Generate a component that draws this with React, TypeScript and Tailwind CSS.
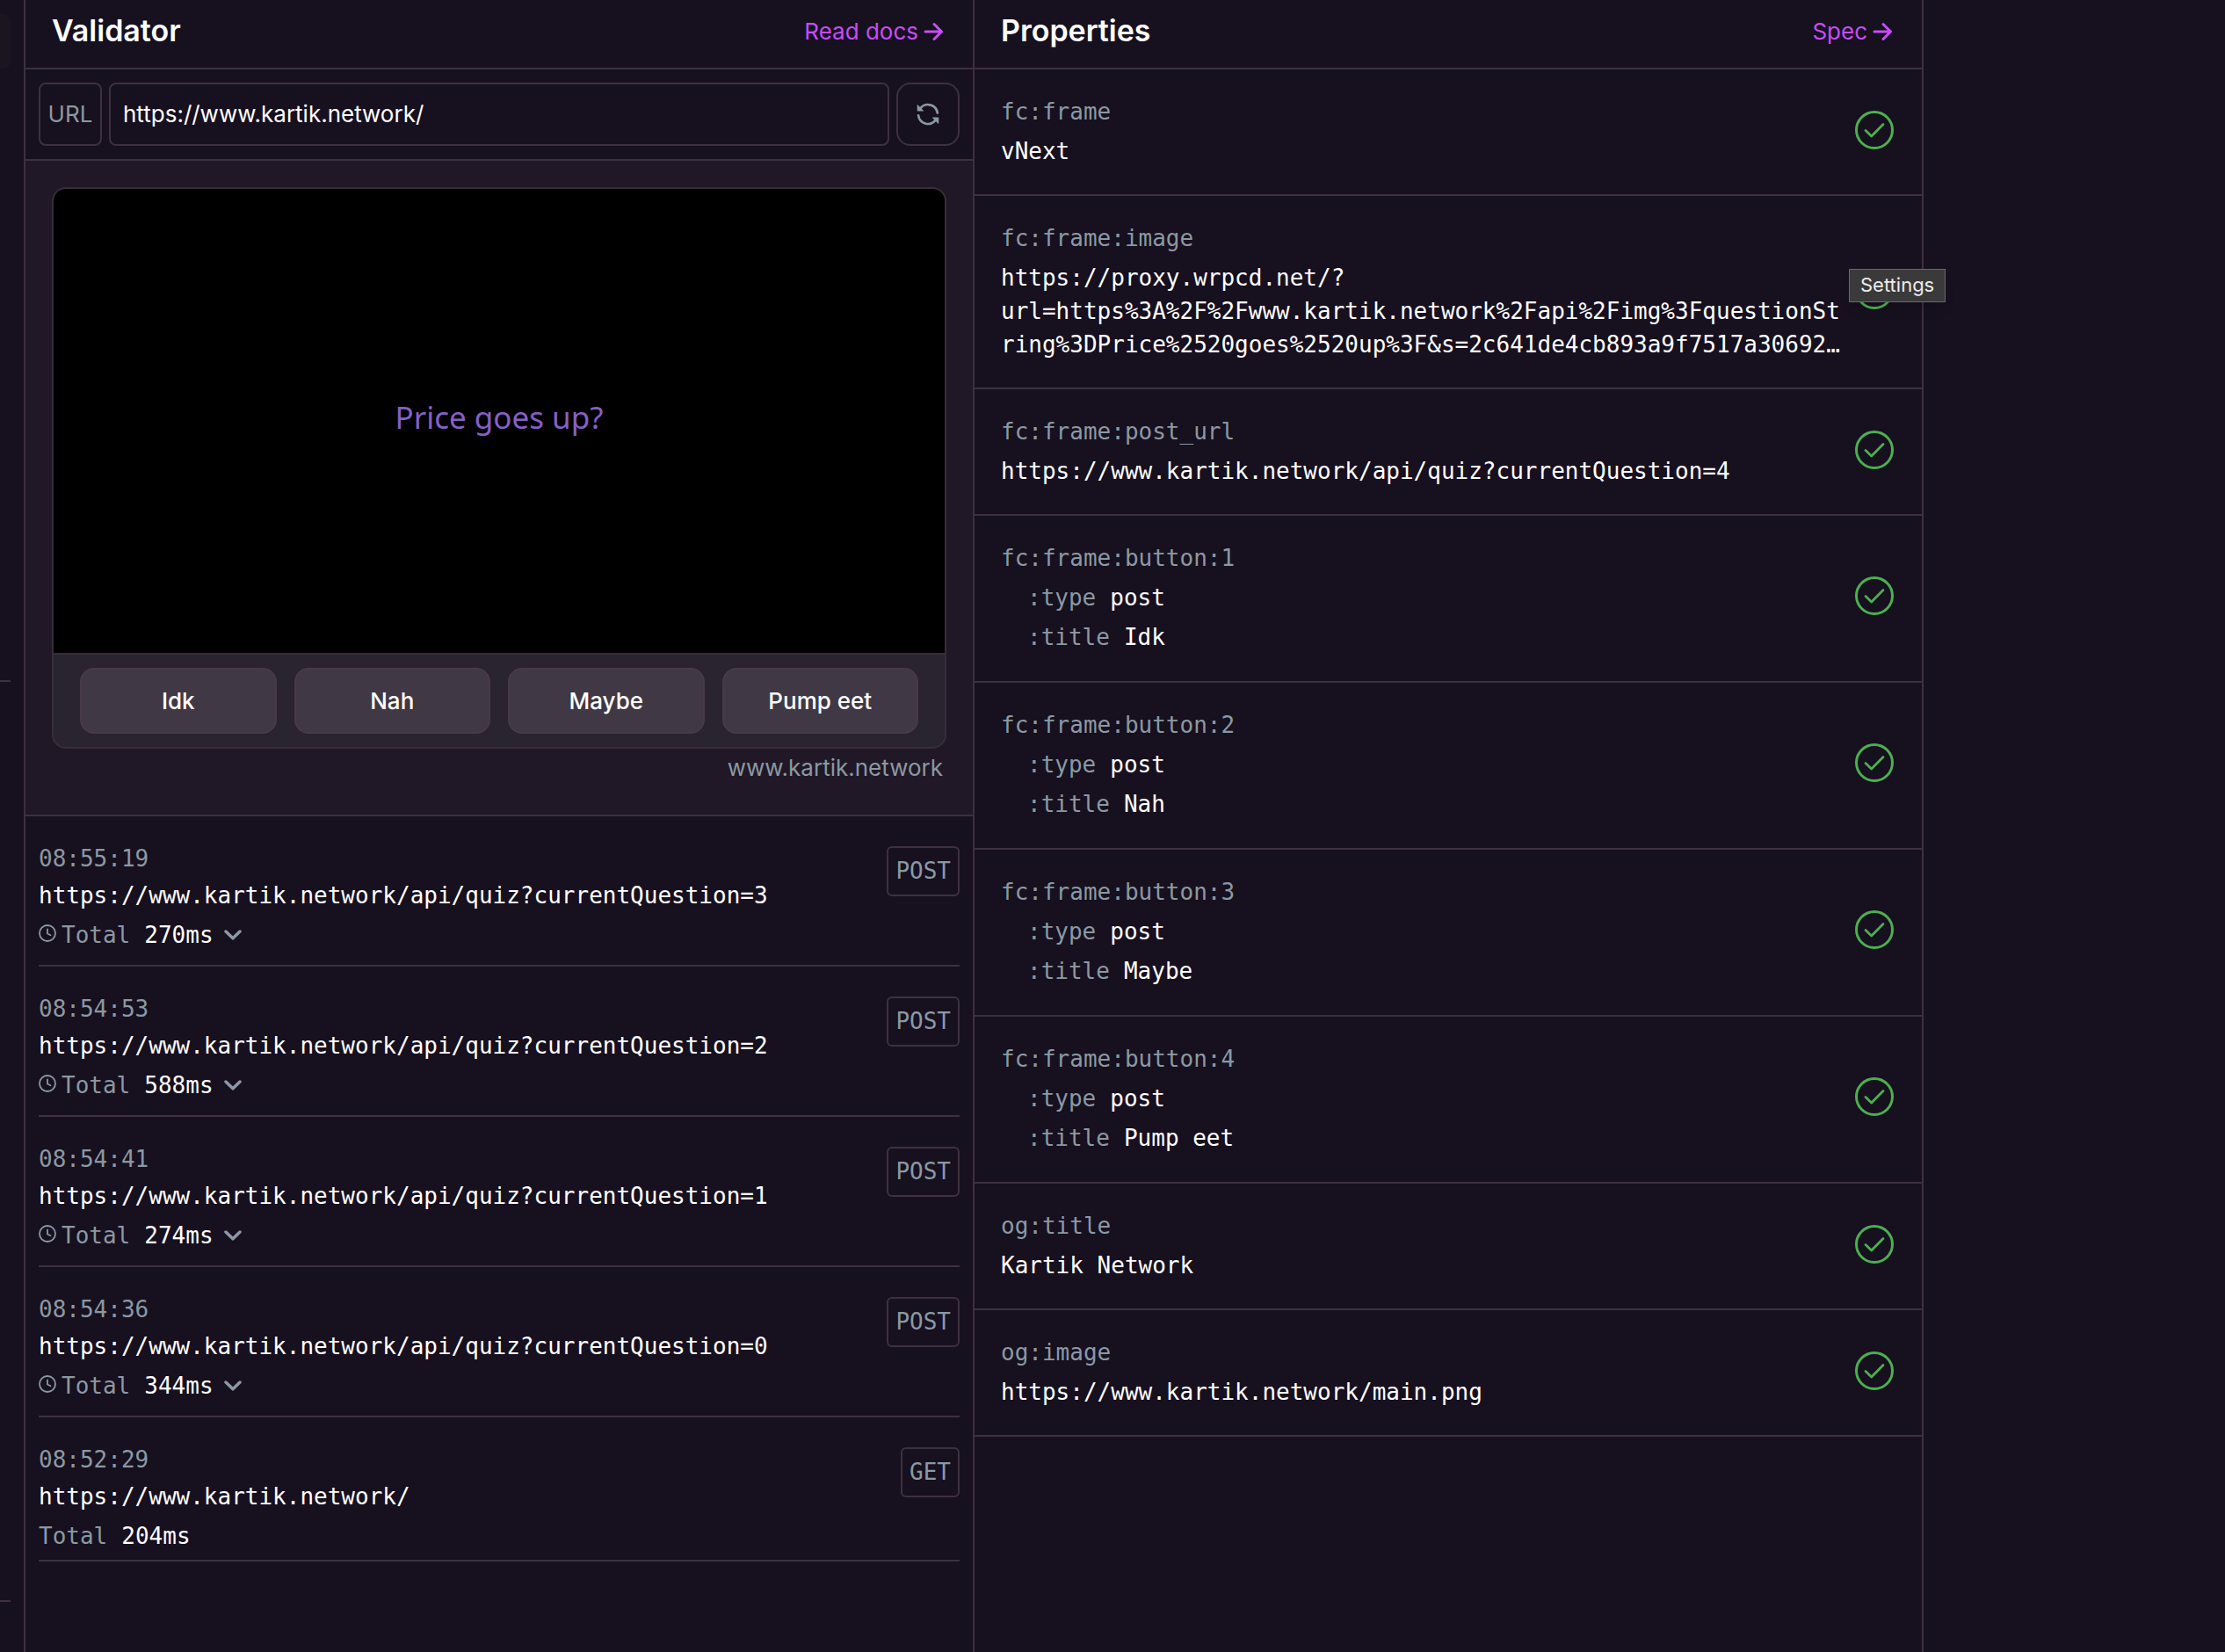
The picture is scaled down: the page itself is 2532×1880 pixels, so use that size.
import { useState } from 'react';

interface LogEntry {
  time: string;
  url: string;
  total: string;
  method: string;
  expandable: boolean;
}

interface Property {
  name: string;
  value?: string;
  fields?: { key: string; value: string }[];
}

const frameButtons = ['Idk', 'Nah', 'Maybe', 'Pump eet'];

const logs: LogEntry[] = [
  { time: '08:55:19', url: 'https://www.kartik.network/api/quiz?currentQuestion=3', total: '270ms', method: 'POST', expandable: true },
  { time: '08:54:53', url: 'https://www.kartik.network/api/quiz?currentQuestion=2', total: '588ms', method: 'POST', expandable: true },
  { time: '08:54:41', url: 'https://www.kartik.network/api/quiz?currentQuestion=1', total: '274ms', method: 'POST', expandable: true },
  { time: '08:54:36', url: 'https://www.kartik.network/api/quiz?currentQuestion=0', total: '344ms', method: 'POST', expandable: true },
  { time: '08:52:29', url: 'https://www.kartik.network/', total: '204ms', method: 'GET', expandable: false },
];

const properties: Property[] = [
  { name: 'fc:frame', value: 'vNext' },
  {
    name: 'fc:frame:image',
    value:
      'https://proxy.wrpcd.net/?url=https%3A%2F%2Fwww.kartik.network%2Fapi%2Fimg%3FquestionString%3DPrice%2520goes%2520up%3F&s=2c641de4cb893a9f7517a30692…',
  },
  { name: 'fc:frame:post_url', value: 'https://www.kartik.network/api/quiz?currentQuestion=4' },
  ...frameButtons.map((title, i) => ({
    name: `fc:frame:button:${i + 1}`,
    fields: [
      { key: ':type', value: 'post' },
      { key: ':title', value: title },
    ],
  })),
  { name: 'og:title', value: 'Kartik Network' },
  { name: 'og:image', value: 'https://www.kartik.network/main.png' },
];

const ArrowIcon = () => (
  <svg viewBox="0 0 22 22" className="h-[22px] w-[22px]" fill="none" stroke="currentColor" strokeWidth="3" strokeLinecap="round" strokeLinejoin="round">
    <path d="M2 11H20M12 2.5L20.5 11L12 19.5" />
  </svg>
);

const RefreshIcon = () => (
  <svg viewBox="0 0 16 16" className="h-7 w-7" fill="currentColor">
    <path d="M1.705 8.005a.75.75 0 0 1 .834.656 5.5 5.5 0 0 0 9.592 2.97l-1.204-1.204a.25.25 0 0 1 .177-.427h3.646a.25.25 0 0 1 .25.25v3.646a.25.25 0 0 1-.427.177l-1.38-1.38A7.002 7.002 0 0 1 1.05 8.84a.75.75 0 0 1 .656-.834ZM8 2.5a5.487 5.487 0 0 0-4.131 1.869l1.204 1.204A.25.25 0 0 1 4.896 6H1.25A.25.25 0 0 1 1 5.75V2.104a.25.25 0 0 1 .427-.177l1.38 1.38A7.002 7.002 0 0 1 14.95 7.16a.75.75 0 0 1-1.49.178A5.5 5.5 0 0 0 8 2.5Z" />
  </svg>
);

const ClockIcon = () => (
  <svg viewBox="0 0 20 20" className="h-5 w-5" fill="none" stroke="currentColor" strokeWidth="1.8" strokeLinecap="round" strokeLinejoin="round">
    <circle cx="10" cy="10" r="9" />
    <path d="M10 5.5V10.5L13.5 12.2" />
  </svg>
);

const ChevronIcon = () => (
  <svg viewBox="0 0 20 12" className="h-3 w-5" fill="none" stroke="currentColor" strokeWidth="3.5" strokeLinecap="round" strokeLinejoin="round">
    <path d="M2 2L10 9.8L18 2" />
  </svg>
);

const CheckIcon = () => (
  <svg viewBox="0 0 48 48" className="h-12 w-12" fill="none" stroke="currentColor" strokeWidth="3" strokeLinecap="round" strokeLinejoin="round">
    <circle cx="24" cy="24" r="20.5" />
    <path d="M14 24.5L20.7 31L34 17.5" strokeWidth="2.8" />
  </svg>
);

const PanelHeader = ({ title, link }: { title: string; link: string }) => (
  <header className="flex h-[79px] items-start justify-between border-b-2 border-[#3d3040] pt-[15px] pr-[34px] pl-[30px]">
    <h2 className="text-[34px] leading-10 font-semibold text-white">{title}</h2>
    <a href="#" className="flex items-center gap-1.5 text-[26px] leading-[42px] text-[#c54df6]">
      {link}
      <ArrowIcon />
    </a>
  </header>
);

const LogRow = ({ entry }: { entry: LogEntry }) => (
  <li className={`flex items-start justify-between border-b-2 border-[#3d3040] pt-[29px] ${entry.expandable ? 'pb-[15px]' : 'pb-2'}`}>
    <div className="font-['DejaVu_Sans_Mono','Liberation_Mono',monospace] text-[26px] leading-[38px]">
      <div className="text-[#8b99a4]">{entry.time}</div>
      <div className="mt-1 text-white">{entry.url}</div>
      <div className="mt-[7px] flex items-center text-[#8b99a4]">
        {entry.expandable && (
          <span className="mr-1.5 pb-1">
            <ClockIcon />
          </span>
        )}
        <span>Total</span>
        <span className="ml-4 text-white">{entry.total}</span>
        {entry.expandable && (
          <button aria-label="Show timing" className="ml-3">
            <ChevronIcon />
          </button>
        )}
      </div>
    </div>
    <span className="mt-[5px] rounded-md border-2 border-[#3d3040] px-2 py-2 font-['DejaVu_Sans_Mono','Liberation_Mono',monospace] text-[26px] leading-[37px] text-[#8b99a4]">
      {entry.method}
    </span>
  </li>
);

const PropertyRow = ({ property }: { property: Property }) => (
  <li className={`flex items-center gap-[5px] border-b-2 border-[#3d3040] px-[30px] pt-[29px] ${property.fields ? 'pb-[31px]' : 'pb-[30px]'}`}>
    <div className="flex min-w-0 flex-1 flex-col gap-[7px] font-['DejaVu_Sans_Mono','Liberation_Mono',monospace] text-[26px] leading-[38px] text-white">
      <div className="text-[#8b99a4]">{property.name}</div>
      {property.value && <div className="break-words">{property.value}</div>}
      {property.fields?.map((field) => (
        <div key={field.key} className="flex gap-4 pl-[30px]">
          <span className="text-[#8b99a4]">{field.key}</span>
          <span>{field.value}</span>
        </div>
      ))}
    </div>
    <span className="pb-1 text-[#4caf50]">
      <CheckIcon />
    </span>
  </li>
);

export default function App() {
  const [url, setUrl] = useState('https://www.kartik.network/');

  return (
    <div className="relative flex min-h-screen bg-[#17101f] font-[Inter,'Liberation_Sans',sans-serif]">
      {/* Edge of the navigation sidebar */}
      <aside className="w-[27px] shrink-0 pt-4">
        <div className="h-[62px] w-3 rounded-r-lg bg-[#1b1522]" />
        <hr className="mt-[696px] w-3 border-t-2 border-[#3d3040]" />
        <hr className="mt-[1045px] w-3 border-t-2 border-[#3d3040]" />
      </aside>

      <main className="grid w-[86%] max-w-[2162px] grid-cols-2 border-r-2 border-[#3d3040]">
        <section className="min-w-0 border-l-2 border-[#3d3040]">
          <PanelHeader title="Validator" link="Read docs" />

          <form className="flex gap-2 border-b-2 border-[#3d3040] p-[15px] text-[26px]" onSubmit={(e) => e.preventDefault()}>
            <label htmlFor="url" className="flex h-[72px] w-[72px] items-center justify-center rounded-lg border-2 border-[#3d3040] pb-0.5 text-[#8b99a4]">
              URL
            </label>
            <input
              id="url"
              type="text"
              value={url}
              onChange={(e) => setUrl(e.target.value)}
              className="h-[72px] min-w-0 flex-1 rounded-lg border-2 border-[#3d3040] px-3.5 pb-0.5 text-white outline-none"
            />
            <button type="submit" aria-label="Refresh" className="flex h-[72px] w-[72px] items-center justify-center rounded-2xl border-2 border-[#3d3040] text-[#8b99a4]">
              <RefreshIcon />
            </button>
          </form>

          <div className="border-b-2 border-[#3d3040] bg-[#201826] px-[30px] pt-[30px] pb-8">
            <div className="overflow-hidden rounded-2xl border-2 border-[#382d3b] bg-[#2a2330]">
              <div className="flex aspect-[1014/528] items-center justify-center bg-black pb-2 font-['Noto_Sans',sans-serif] text-[35px] text-[#8560c8]">
                Price goes up?
              </div>
              <div className="grid grid-cols-4 gap-5 border-t-2 border-[#382d3b] px-[30px] py-[15px]">
                {frameButtons.map((label) => (
                  <button key={label} className="h-[75px] rounded-2xl border-2 border-[#483a49] bg-[#403844] text-[26px] font-medium text-white">
                    {label}
                  </button>
                ))}
              </div>
            </div>
            <div className="mt-0.5 mb-0.5 pr-1 text-right text-[26px] leading-[39px] text-[#8b99a4]">www.kartik.network</div>
          </div>

          <ul className="px-[15px]">
            {logs.map((entry) => (
              <LogRow key={entry.time} entry={entry} />
            ))}
          </ul>
        </section>

        <section className="min-w-0 border-l-2 border-[#3d3040]">
          <PanelHeader title="Properties" link="Spec" />
          <ul>
            {properties.map((property) => (
              <PropertyRow key={property.name} property={property} />
            ))}
          </ul>
        </section>
      </main>

      <div role="tooltip" className="absolute top-[306px] left-[2104px] border border-[#6a6a6a] bg-[#3a3a3a] px-3 pb-0.5 text-[22px] leading-[34px] text-[#ececec] shadow-lg">
        Settings
      </div>
    </div>
  );
}
